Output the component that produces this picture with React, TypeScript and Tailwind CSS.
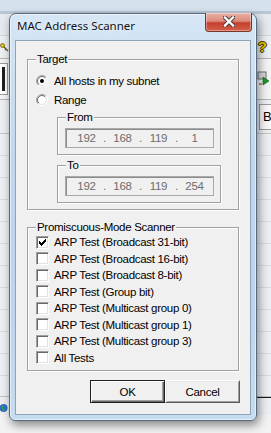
import React from 'react'

const ui = "font-['Liberation_Sans',Arial,sans-serif] text-[11.5px] tracking-[-0.3px] leading-[14px] text-black"

const CHECK: [number, number][] = [[0, 2], [1, 3], [2, 4], [3, 3], [4, 2], [5, 1], [6, 0]]

const Radio = ({ id, checked }: { id: string; checked?: boolean }) => (
  <svg width="12" height="12" viewBox="0 0 12 12" className="shrink-0">
    <defs>
      <linearGradient id={`${id}-o`} x1="0" y1="0" x2="1" y2="1">
        <stop offset="0.5" stopColor="#a0a0a0" />
        <stop offset="0.5" stopColor="#ffffff" />
      </linearGradient>
      <linearGradient id={`${id}-i`} x1="0" y1="0" x2="1" y2="1">
        <stop offset="0.5" stopColor="#696969" />
        <stop offset="0.5" stopColor="#e3e3e3" />
      </linearGradient>
    </defs>
    <circle cx="6" cy="6" r="5.5" fill="none" stroke={`url(#${id}-o)`} />
    <circle cx="6" cy="6" r="4.5" fill="#fff" stroke={`url(#${id}-i)`} />
    {checked && <circle cx="6" cy="6" r="2" fill="#000" />}
  </svg>
)

const Checkbox = ({ checked }: { checked?: boolean }) => (
  <span className="box-border flex w-[13px] h-[13px] shrink-0 pl-[2px] pt-[2px] bg-white border border-t-[#a0a0a0] border-l-[#a0a0a0] border-r-white border-b-white shadow-[inset_1px_1px_0_#696969,inset_-1px_-1px_0_#e3e3e3]">
    {checked && (
      <svg width="7" height="7" viewBox="0 0 7 7" shapeRendering="crispEdges">
        {CHECK.map(([x, y]) => (
          <rect key={x} x={x} y={y} width="1" height="3" fill="#000" />
        ))}
      </svg>
    )}
  </span>
)

const IpField = ({ parts }: { parts: string[] }) => (
  <div className="ml-[7px] w-[149px] h-[20px] flex items-center pl-[5.5px] border border-[#a9a9a9] shadow-[inset_1px_1px_0_#8c8c8c] bg-[#f0f0f0] text-[#6d6d6d]">
    {parts.map((p, i) => (
      <React.Fragment key={i}>
        {i > 0 && <span className="w-[6px] text-center">.</span>}
        <span className="w-[30px] text-center">{p}</span>
      </React.Fragment>
    ))}
  </div>
)

const Group = ({ title, className, children }: { title: string; className?: string; children: React.ReactNode }) => (
  <fieldset className={`border border-[#a0a0a0] shadow-[inset_1px_1px_0_#fff,1px_1px_0_#fff] ${className ?? ''}`}>
    <legend className="ml-[8px] px-[1px] bg-[#f0f0f0] leading-[14px]">{title}</legend>
    {children}
  </fieldset>
)

const tests = [
  'ARP Test (Broadcast 31-bit)',
  'ARP Test (Broadcast 16-bit)',
  'ARP Test (Broadcast 8-bit)',
  'ARP Test (Group bit)',
  'ARP Test (Multicast group 0)',
  'ARP Test (Multicast group 1)',
  'ARP Test (Multicast group 3)',
  'All Tests',
]

const CloseButton = () => (
  <div className="mt-[-1px] mr-[4px] w-[47px] h-[19px] shrink-0 flex items-center justify-center pb-[2px] rounded-b-[4px] border border-t-0 border-[#7c3429] bg-[linear-gradient(180deg,#eab2a6_0%,#dc8a7a_45%,#c4402e_55%,#d4604a_100%)] shadow-[inset_0_0_0_1px_rgba(255,255,255,0.35)]">
    <svg width="12" height="11" viewBox="0 0 12 11">
      <path d="M2 1.5 L10 9.5 M10 1.5 L2 9.5" stroke="#4a3a38" strokeWidth="4.2" strokeLinecap="square" />
      <path d="M2 1.5 L10 9.5 M10 1.5 L2 9.5" stroke="#fff" strokeWidth="2.4" strokeLinecap="square" />
    </svg>
  </div>
)

const Backdrop = () => (
  <div className="flex flex-col w-full h-full bg-[#eceff2]">
    <div className="h-[11px] shrink-0 bg-[#d5e1ed]" />
    <div className="h-[3px] shrink-0 bg-[#b9c7d5]" />
    <div className="h-[22px] shrink-0 bg-[#e4eaf0] border-b border-[#cfd5db]" />
    <div className="h-[22px] shrink-0 flex justify-between items-center">
      <svg width="9" height="9" viewBox="0 0 9 9">
        <circle cx="2.5" cy="2.5" r="2" fill="#e8c41a" stroke="#6b5a10" strokeWidth="0.8" />
        <path d="M4 4 L8 8 M6 6 L5 7" stroke="#6b5a10" strokeWidth="1.2" />
      </svg>
      <span className="mr-[4px] font-['Liberation_Sans',sans-serif] text-[15px] font-bold leading-[16px] text-[#e6c400] [text-shadow:1px_0_0_#4a3d00,-1px_0_0_#4a3d00,0_1px_0_#4a3d00,0_-1px_0_#4a3d00]">?</span>
    </div>
    <div className="h-[42px] shrink-0 flex justify-between items-center border-y border-[#b5b5b5] bg-[#f3f3f3]">
      <div className="w-[8px] h-[32px] border border-l-0 border-[#9a9a9a] bg-white flex items-center justify-center">
        <div className="w-[3px] h-[24px] bg-[#202020]" />
      </div>
      <svg width="14" height="20" viewBox="0 0 14 20">
        <rect x="1" y="3" width="8" height="7" fill="#d8d8d8" stroke="#707070" />
        <path d="M6 8 L6 16 L12 12 Z" fill="#1c9a2c" stroke="#0c5a16" strokeWidth="0.6" />
        <path d="M2 15 L5 15" stroke="#c03030" strokeWidth="1.2" />
      </svg>
    </div>
    <div className="h-[34px] shrink-0 flex justify-end items-center border-b border-[#c5c5c5]">
      <div className="w-[12px] h-[26px] border border-r-0 border-[#9a9a9a] bg-[#f7f7f7] flex items-center pl-[3px] font-['Liberation_Sans',sans-serif] text-[13px]">B</div>
    </div>
    <div className="flex-1 bg-[repeating-linear-gradient(180deg,transparent_0px,transparent_21px,#dadde0_21px,#dadde0_22px)]" />
    <div className="h-[1px] shrink-0 bg-[#bfbfbf]" />
    <div className="h-[4px] shrink-0 flex justify-end">
      <div className="w-[14px] h-[1px] bg-[#1a1a1a]" />
    </div>
    <div className="h-[14px] shrink-0 flex items-center">
      <svg width="9" height="10" viewBox="0 0 9 10">
        <circle cx="3.5" cy="5" r="4" fill="#2c6fc9" />
        <path d="M1 3 Q3 2 4 4 Q3 6 5 7 L3 8 Z" fill="#3aa040" />
      </svg>
    </div>
    <div className="h-[18px] shrink-0 bg-[#f2f2f2]" />
  </div>
)

const App = () => (
  <div className="relative w-[271px] h-[433px] overflow-hidden">
    <Backdrop />

    <div className="absolute left-[9px] top-[13px] w-[248px] flex flex-col pb-[5px] rounded-t-[7px] rounded-b-[6px] border border-[#56697d] bg-[linear-gradient(180deg,#d6e6f5_0%,#c0d7ee_35%,#bcd4ec_70%,#c6dcf1_100%)] shadow-[inset_0_0_0_1px_rgba(255,255,255,0.55),2px_4px_10px_rgba(0,0,0,0.45)]">
      <div className="h-[26px] flex items-start">
        <span className="flex-1 pl-[7px] mt-[4px] font-['Noto_Sans',sans-serif] text-[11.5px] leading-[16px] text-[#141414] [text-shadow:0_0_6px_rgba(255,255,255,0.95)]">
          MAC Address Scanner
        </span>
        <CloseButton />
      </div>

      <div className={`mx-[5px] flex flex-col pt-[11px] pb-[11px] border border-[#8ea3b8] bg-[#f0f0f0] ${ui}`}>
        <Group title="Target" className="mx-[11px]">
          <div className="pl-[8px] pb-[6px]">
            <label className="mt-[5px] h-[19px] flex items-center gap-[6px]">
              <Radio id="r-all" checked />
              <span>All hosts in my subnet</span>
            </label>
            <label className="h-[19px] flex items-center gap-[6px]">
              <Radio id="r-range" />
              <span>Range</span>
            </label>
            <Group title="From" className="ml-[21px] mt-[1px] w-[164px]">
              <div className="pt-[4px] pb-[6px]">
                <IpField parts={['192', '168', '119', '1']} />
              </div>
            </Group>
            <Group title="To" className="ml-[21px] mt-[3px] w-[164px]">
              <div className="pt-[4px] pb-[6px]">
                <IpField parts={['192', '168', '119', '254']} />
              </div>
            </Group>
          </div>
        </Group>

        <Group title="Promiscuous-Mode Scanner" className="mx-[11px] mt-[10px]">
          <div className="pl-[8px] pb-[4px]">
            {tests.map((t, i) => (
              <label key={t} className="h-[16.5px] flex items-center gap-[5px]">
                <Checkbox checked={i === 0} />
                <span>{t}</span>
              </label>
            ))}
          </div>
        </Group>

        <div className="mt-[9px] pr-[10px] flex justify-end">
          <button className="w-[75px] h-[23px] flex items-center justify-center border border-[#1e1e1e] bg-[#f0f0f0] shadow-[inset_1px_1px_0_#fff,inset_-1px_-1px_0_#696969,inset_-2px_-2px_0_#a0a0a0]">
            OK
          </button>
          <button className="w-[75px] h-[23px] flex items-center justify-center border border-t-white border-l-white border-r-[#5a5a5a] border-b-[#5a5a5a] bg-[#f0f0f0] shadow-[inset_1px_1px_0_#e8e8e8,inset_-1px_-1px_0_#a0a0a0]">
            Cancel
          </button>
        </div>
      </div>
    </div>
  </div>
)

export default App
